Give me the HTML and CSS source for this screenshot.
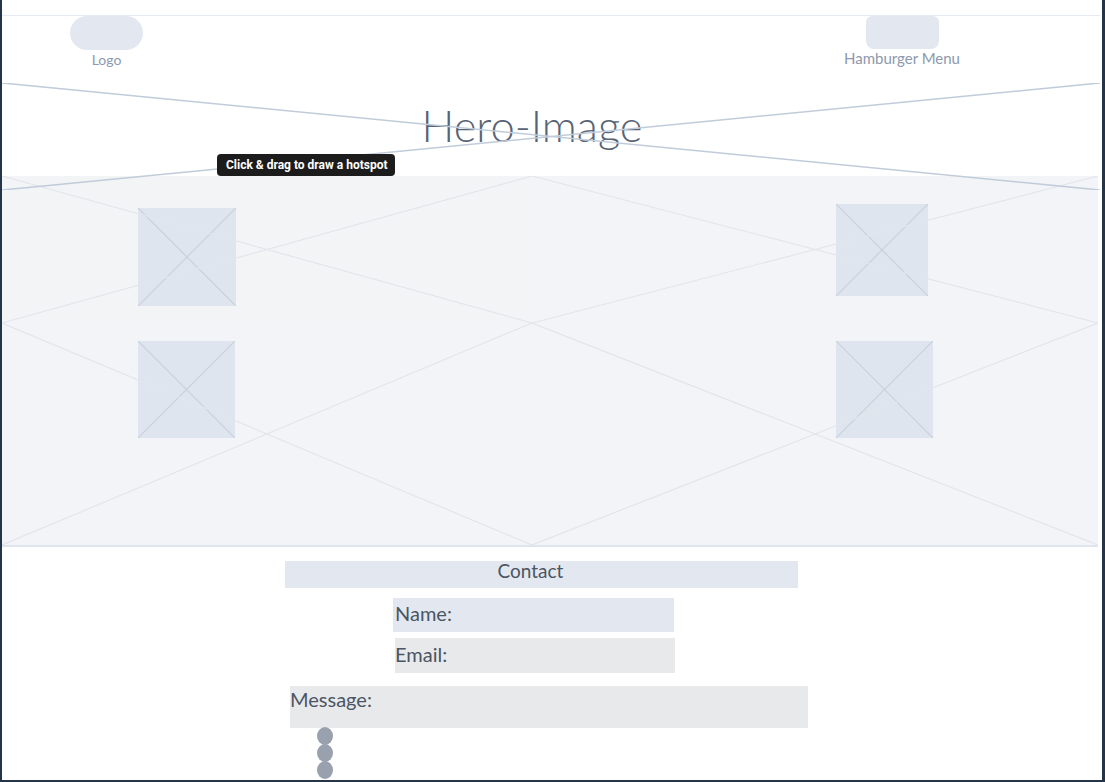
FILE: index.html
```
<!DOCTYPE html>
<html lang="en">
<head>
<meta charset="utf-8">
<title>Wireframe</title>
<link rel="stylesheet" href="styles.css">
</head>
<body>
<div class="frame">
  <header class="topbar">
    <div class="brand">
      <div class="logo-pill"></div>
      <span class="logo-label">Logo</span>
    </div>
    <div class="menu">
      <div class="menu-pill"></div>
      <span class="menu-label">Hamburger Menu</span>
    </div>
  </header>

  <section class="hero">
    <h1 class="hero-title">Hero-Image</h1>
    <svg class="hero-x" viewBox="0 0 1098 107" preserveAspectRatio="none">
      <line x1="0" y1="0" x2="1098" y2="107"/>
      <line x1="0" y1="107" x2="1098" y2="0"/>
    </svg>
    <div class="tooltip">Click &amp; drag to draw a hotspot</div>
  </section>

  <section class="gallery">
    <div class="cell cell-tl">
      <div class="thumb thumb-tl"><svg viewBox="0 0 100 100" preserveAspectRatio="none"><line x1="0" y1="0" x2="100" y2="100"/><line x1="0" y1="100" x2="100" y2="0"/></svg></div>
      <svg class="cell-x" viewBox="0 0 100 100" preserveAspectRatio="none"><line x1="0" y1="0" x2="100" y2="100"/><line x1="0" y1="100" x2="100" y2="0"/></svg>
    </div>
    <div class="cell cell-tr">
      <div class="thumb thumb-tr"><svg viewBox="0 0 100 100" preserveAspectRatio="none"><line x1="0" y1="0" x2="100" y2="100"/><line x1="0" y1="100" x2="100" y2="0"/></svg></div>
      <svg class="cell-x" viewBox="0 0 100 100" preserveAspectRatio="none"><line x1="0" y1="0" x2="100" y2="100"/><line x1="0" y1="100" x2="100" y2="0"/></svg>
    </div>
    <div class="cell cell-bl">
      <div class="thumb thumb-bl"><svg viewBox="0 0 100 100" preserveAspectRatio="none"><line x1="0" y1="0" x2="100" y2="100"/><line x1="0" y1="100" x2="100" y2="0"/></svg></div>
      <svg class="cell-x" viewBox="0 0 100 100" preserveAspectRatio="none"><line x1="0" y1="0" x2="100" y2="100"/><line x1="0" y1="100" x2="100" y2="0"/></svg>
    </div>
    <div class="cell cell-br">
      <div class="thumb thumb-br"><svg viewBox="0 0 100 100" preserveAspectRatio="none"><line x1="0" y1="0" x2="100" y2="100"/><line x1="0" y1="100" x2="100" y2="0"/></svg></div>
      <svg class="cell-x" viewBox="0 0 100 100" preserveAspectRatio="none"><line x1="0" y1="0" x2="100" y2="100"/><line x1="0" y1="100" x2="100" y2="0"/></svg>
    </div>
  </section>

  <section class="contact">
    <div class="contact-title">Contact</div>
    <div class="field field-name">Name:</div>
    <div class="field field-email">Email:</div>
    <div class="field field-message">Message:</div>
    <div class="dots">
      <span class="dot"></span>
      <span class="dot"></span>
      <span class="dot"></span>
    </div>
  </section>
</div>
</body>
</html>
```

FILE: styles.css
```
* { box-sizing: border-box; }

html, body {
  margin: 0;
  padding: 0;
  background: #ffffff;
}

body {
  font-family: Lato, "Open Sans", "Liberation Sans", sans-serif;
  color: #4b5563;
}

.frame {
  width: 1105px;
  height: 782px;
  border-left: 2px solid #253446;
  border-right: 3px solid #253446;
  border-bottom: 2px solid #253446;
  overflow: hidden;
  background: #ffffff;
}

/* header */
.topbar {
  margin-top: 15px;
  margin-right: 2px;
  height: 68px;
  border-top: 1px solid #e6eaf1;
  display: flex;
  justify-content: space-between;
  align-items: flex-start;
  padding-left: 68px;
  padding-right: 128px;
}

.brand {
  width: 73px;
  display: flex;
  flex-direction: column;
  align-items: center;
}

.logo-pill {
  width: 73px;
  height: 34px;
  border-radius: 17px;
  background: #e3e8f0;
}

.logo-label {
  margin-top: 1px;
  font-size: 14px;
  line-height: 17px;
  color: #8d99ad;
}

.menu {
  width: 140px;
  display: flex;
  flex-direction: column;
  align-items: center;
}

.menu-pill {
  width: 73px;
  height: 33px;
  border-radius: 6px 6px 8px 8px;
  background: #e3e8f0;
}

.menu-label {
  font-size: 15px;
  line-height: 18px;
  color: #8d99ad;
  white-space: nowrap;
}

/* hero */
.hero {
  position: relative;
  height: 93px;
  padding-right: 40px;
}

.hero-title {
  margin: 0;
  padding-top: 16px;
  font-size: 43.5px;
  line-height: 53px;
  font-weight: 300;
  color: #576475;
  text-align: center;
}

.hero-x {
  position: absolute;
  left: 0;
  top: 0;
  width: 1098px;
  height: 107px;
  z-index: 2;
  pointer-events: none;
}

.hero-x line {
  stroke: #c1ccda;
  stroke-width: 1.6;
}

.tooltip {
  position: absolute;
  left: 215px;
  top: 71px;
  z-index: 3;
  height: 22px;
  padding: 0 8px 0 9px;
  border-radius: 4px;
  background: #1c1c1c;
  color: #ffffff;
  font-family: Roboto, Inter, "Liberation Sans", sans-serif;
  font-weight: 700;
  font-size: 12px;
  line-height: 22px;
  white-space: nowrap;
}

/* gallery */
.gallery {
  margin-right: 4px;
  display: grid;
  grid-template-columns: 530px 1fr;
  grid-template-rows: 147px 222px;
  background: #f2f4f7;
  border-bottom: 2px solid #dfe5ee;
}

.cell {
  position: relative;
}

.cell-tl { background: #f3f4f6; }

.cell-x {
  position: absolute;
  left: 0;
  top: 0;
  width: 100%;
  height: 100%;
  pointer-events: none;
}

.cell-x line {
  stroke: #e2e6ec;
  stroke-width: 1.2;
  vector-effect: non-scaling-stroke;
}

.thumb {
  background: #dee5ee;
}

.thumb svg {
  display: block;
  width: 100%;
  height: 100%;
}

.thumb line {
  stroke: #c9d1dc;
  stroke-width: 1.2;
  vector-effect: non-scaling-stroke;
}

.thumb-tl { width: 98px; height: 98px; margin: 32px 0 0 136px; }
.thumb-tr { width: 92px; height: 92px; margin: 28px 0 0 304px; }
.thumb-bl { width: 97px; height: 97px; margin: 18px 0 0 136px; }
.thumb-br { width: 97px; height: 97px; margin: 18px 0 0 304px; }

/* contact */
.contact {
  display: flex;
  flex-direction: column;
  align-items: flex-start;
}

.contact-title {
  margin: 14px 0 0 283px;
  width: 513px;
  height: 27px;
  background: #e3e8f0;
  text-align: center;
  font-size: 19px;
  line-height: 20px;
  padding-right: 22px;
  color: #4b5563;
}

.field {
  font-size: 20px;
  line-height: 24px;
  color: #4b5563;
}

.field-name {
  margin: 10px 0 0 391px;
  width: 281px;
  height: 34px;
  padding: 3px 0 0 2px;
  background: #e3e8f0;
}

.field-email {
  margin: 6px 0 0 393px;
  width: 280px;
  height: 35px;
  padding: 4px 0 0 0;
  background: #e8e9eb;
}

.field-message {
  margin: 13px 0 0 288px;
  width: 518px;
  height: 42px;
  padding: 1px 0 0 0;
  background: #e8e9eb;
}

.dots {
  margin: -1px 0 0 315px;
  display: flex;
  flex-direction: column;
}

.dot {
  display: block;
  width: 16px;
  height: 18px;
  border-radius: 50%;
  background: #98a1ad;
}

.dot + .dot {
  margin-top: -1px;
}
```
